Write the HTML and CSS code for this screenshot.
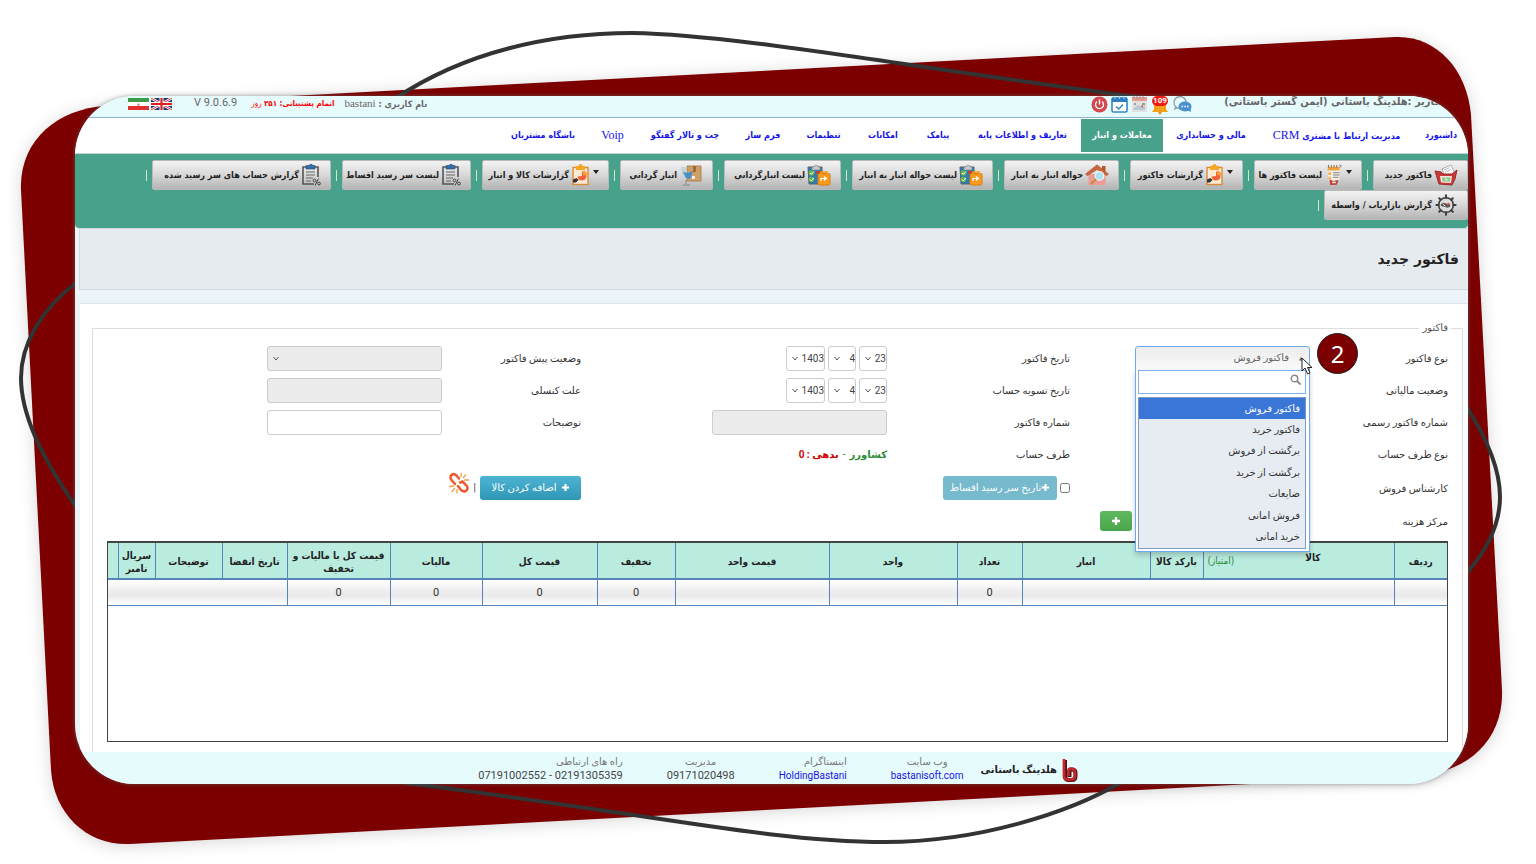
FILE: index.html
```html
<!DOCTYPE html>
<html lang="fa" dir="rtl">
<head>
<meta charset="utf-8">
<title>فاکتور جدید</title>
<link rel="stylesheet" href="styles.css">
</head>
<body>
<svg class="symbols" aria-hidden="true">
  <symbol id="i-percent" viewBox="0 0 20 22">
    <path d="M6 3H2v17h11M14 3h3v10" fill="none" stroke="#555" stroke-width="1.6"/>
    <path d="M5 1.5h3.500a1.500 1.500 0 0 1 3 0H14V5H5z" fill="#2f6fb0" stroke="#30475e" stroke-width=".6"/>
    <path d="M5 8h9M5 11h9M5 14h7M5 17h5" stroke="#666" stroke-width="1.200"/>
    <circle cx="13.500" cy="16.500" r="1.400" fill="none" stroke="#444"/><circle cx="18" cy="19.500" r="1.400" fill="none" stroke="#444"/><path d="M17.500 14.500l-3.500 7" stroke="#444"/>
  </symbol>
  <symbol id="i-report" viewBox="0 0 20 22">
    <rect x="2" y="3.500" width="15" height="17" fill="#fbe9d7" stroke="#d98a3a" stroke-width="1.400"/>
    <path d="M5 2h2.500a2 2 0 0 1 4 0H14v4H5z" fill="#f5a623"/>
    <path d="M11 7.500a4.500 4.500 0 1 1-4.500 5L11 12z" fill="#f4623a"/><path d="M12 6.800a4.500 4.500 0 0 1 4.500 4.500L12 11.300z" fill="#ff9c3a"/>
    <path d="M2 15.500l3.500-1.500 2 2-2.500 2.500H2z" fill="#333"/>
  </symbol>
  <symbol id="i-check" viewBox="0 0 24 22">
    <path d="M1 3h14v17H2z" fill="#2d7db3" stroke="#55606b" stroke-width="1"/>
    <path d="M5 3h2a2 2 0 0 1 4 0h2v3H5z" fill="#c3c9cd" stroke="#888" stroke-width=".6"/>
    <circle cx="4.500" cy="9" r="2.800" fill="#69b74a"/><circle cx="4.500" cy="15.500" r="2.800" fill="#69b74a"/>
    <path d="M3 9l1.300 1.300L7 7.500M3 15.500l1.300 1.300L7 14" fill="none" stroke="#fff" stroke-width="1"/>
    <path d="M9 7h5v3H9z" fill="#b8492e"/>
    <rect x="11" y="9.500" width="12" height="11.500" rx="1.500" fill="#f79a1e" stroke="#d87d0d"/><path d="M14 10V8h6v2" fill="none" stroke="#f79a1e" stroke-width="1.500"/>
    <path d="M14 17v-2.500h5M17 12.500l2.500 2-2.500 2" fill="none" stroke="#fff" stroke-width="1.200"/>
  </symbol>
  <symbol id="i-house" viewBox="0 0 24 22">
    <path d="M3.500 10h17v11h-17z" fill="#eb9c96"/><path d="M17 2h3.500v6H17z" fill="#b5552f"/>
    <path d="M12 .8L23.500 10l-1.800 1.700L12 5.500l-9.700 6.200L.5 10z" fill="#c9653a" stroke="#a9502b" stroke-width=".5"/>
    <circle cx="14.500" cy="12" r="4.300" fill="#a9e1f5" stroke="#f1f1f1" stroke-width="1.300"/><path d="M11 15l-5 5" stroke="#c28a3c" stroke-width="2"/>
  </symbol>
  <symbol id="i-box" viewBox="0 0 24 22">
    <path d="M8 2h14v15H8z" fill="#cf9f68" stroke="#a77944" stroke-width=".8"/><path d="M14 2h3v6h-3z" fill="#9c6b39"/>
    <path d="M2 3h6l-1 13H4z" fill="#c8d1d8"/><path d="M4 8l5 1 2 6-4-1zM9 9l5-2-3 8z" fill="#3f91ca"/><path d="M13 12h3v3h-3z" fill="#e7eff4"/>
    <path d="M7 16v4M4 21h7" stroke="#999" stroke-width="1.500"/>
  </symbol>
  <symbol id="i-folder" viewBox="0 0 24 22">
    <path d="M8 5l9-4 4 9-9 5z" fill="#fff" stroke="#999" stroke-width=".8"/><path d="M10 6l6-2.500M11 8l6-2.500" stroke="#b9b9b9"/>
    <path d="M1 7l6 1 2 2 9 0 5-4-2 9-3 6-13-1z" fill="#c9393b" stroke="#98282b"/>
    <path d="M6 12h12l-1 7-10-.5z" fill="#f0e5da"/><path d="M8 13.500h8.500l-.5 4H8.500z" fill="#8ec88a"/><circle cx="12.300" cy="15.500" r="1.200" fill="#cde8c6"/>
  </symbol>
  <symbol id="i-list" viewBox="0 0 20 24">
    <path d="M4 4h12v14H4z" fill="#f5f1ea"/><path d="M3 3h13v4H3z" fill="#f2a43c"/><path d="M4 4V1M7 4V1M10 4V1M13 4V1M16 4l2-2-2-1" stroke="#555" fill="none" stroke-width=".8"/>
    <path d="M9 9.500h7M9 12h7M9 14.500h6" stroke="#777" stroke-width="1"/><path d="M4 9h3v3H4zM4 14h3v3H4z" fill="#f5b14a"/>
    <path d="M5 17l4 1.500 6-1-2 5-7 .5z" fill="#c8383a"/><path d="M8 19h4v2H8z" fill="#d9ead2"/>
  </symbol>
  <symbol id="i-gear" viewBox="0 0 24 24">
    <circle cx="12" cy="12" r="8" fill="#dcdcdc" stroke="#3d3d3d" stroke-width="1.700"/>
    <g stroke="#3d3d3d" stroke-width="2.200" stroke-linecap="round"><path d="M12 1.500V4M12 20v2.500M1.500 12H4M20 12h2.500M4.600 4.600l1.700 1.700M17.700 17.700l1.700 1.700M19.400 4.600l-1.700 1.700M6.300 17.700l-1.700 1.700"/></g>
    <path d="M6.500 11l3-1.500 3 1 4 1v2.500l-3 1-3.500-1-3.500-1z" fill="#555"/><path d="M12.500 10.500l3-1 1 2-3 1z" fill="#d65045"/><path d="M8.500 11l3 2.500" stroke="#eee"/>
  </symbol>
  <symbol id="i-plus" viewBox="0 0 10 10"><path d="M5 1v8M1 5h8" stroke="#fff" stroke-width="2.400"/></symbol>
</svg>

<svg class="backdrop" viewBox="0 0 1536 864" preserveAspectRatio="none" aria-hidden="true">
  <path class="slab" d="M105 106C58 109 19 140 21 190L51 770C54 815 88 846 130 844L1420 775C1470 772 1504 737 1502 690L1471 115C1467 68 1435 35 1395 37Z"/>
  <g class="loop">
    <path d="M396 98C465 52 550 33 632 33C740 35 900 66 1145 98"/>
    <path d="M405 783C640 812 768 842 885 842C980 842 1070 812 1120 783"/>
    <path d="M77 282C40 310 21 345 21 378C21 420 50 470 77 508"/>
    <path d="M1466 406C1488 440 1500 470 1500 497C1500 525 1487 550 1466 574"/>
  </g>
</svg>

<div class="screen">
  <header class="topbar">
    <span class="company">کاربر :هلدینگ باستانی (ایمن گستر باستانی)</span>
    <span class="status">
      <svg width="20" height="16" viewBox="0 0 20 16"><circle cx="8" cy="6.500" r="6" fill="none" stroke="#8c9aa8" stroke-width="1.300"/><path d="M3 11l-1.500 3 4-1.500" fill="#8c9aa8"/><ellipse cx="13" cy="10.500" rx="6.500" ry="5" fill="#4a8fd0"/><path d="M15 14l4 2-.5-4" fill="#4a8fd0"/><path d="M9.500 10.500h1.500M12.300 10.500h1.500M15 10.500h1.500" stroke="#fff" stroke-width="1.500"/></svg>
      <span class="alert"><svg width="18" height="19" viewBox="0 0 18 19"><path d="M3 7h12v6l2 3H1l2-3z" fill="#f5a11c"/><path d="M7 16h4l-2 3z" fill="#e88c10"/></svg><b>109</b></span>
      <svg width="17" height="17" viewBox="0 0 17 17"><path d="M1 1h15v15H1z" fill="#e2e2e2"/><path d="M1 1h15v4H1z" fill="#e99a8f"/><path d="M3 0v3M6 0v3M9 0v3M12 0v3" stroke="#999"/><path d="M3 7h2v2H3zM11 7h3v2h-3z" fill="#999"/><path d="M2 13l5-4 3 2 4-2v5H2z" fill="#b5c9d6"/><path d="M9 10l3-1v3z" fill="#e8703d"/></svg>
      <svg width="17" height="17" viewBox="0 0 17 17"><rect x="1" y="2" width="15" height="14" rx="1.500" fill="#fff" stroke="#3487c4" stroke-width="1.600"/><path d="M1 1.500h15V6H1z" fill="#2f7fc0"/><path d="M4 0v3M8.500 0v3M13 0v3" stroke="#a9d0ea"/><path d="M5 10.500l2.700 2.500L12 8.500" fill="none" stroke="#3487c4" stroke-width="1.500"/></svg>
      <svg width="17" height="17" viewBox="0 0 17 17"><circle cx="8.500" cy="8.500" r="8" fill="#d3494e"/><path d="M6 5.500a4 4 0 1 0 5 0M8.500 3.500v5" fill="none" stroke="#fff" stroke-width="1.300"/></svg>
    </span>
    <span class="user"><b>نام کاربری :</b> bastani</span>
    <span class="support"><b>اتمام پشتیبانی: ۲۵۱</b> روز</span>
    <span class="version" dir="ltr">V 9.0.6.9</span>
    <span class="flags">
      <svg width="21" height="12" viewBox="0 0 21 12"><path d="M0 0h21v12H0z" fill="#21366f"/><path d="M0 0l21 12M21 0L0 12" stroke="#fff" stroke-width="2.600"/><path d="M0 0l21 12M21 0L0 12" stroke="#d22" stroke-width=".9"/><path d="M10.500 0v12M0 6h21" stroke="#fff" stroke-width="4"/><path d="M10.500 0v12M0 6h21" stroke="#d22" stroke-width="2.200"/></svg>
      <svg width="21" height="12" viewBox="0 0 21 12"><path d="M0 0h21v12H0z" fill="#fff"/><path d="M0 0h21v4H0z" fill="#3c9a4c"/><path d="M0 8h21v4H0z" fill="#e0312f"/><path d="M9 7.500l1.500-2.500L12 7.500z" fill="#d66"/></svg>
    </span>
  </header>

  <nav class="tabs">
    <a href="#">داشبورد</a><a href="#">مدیریت ارتباط با مشتری <span>CRM</span></a><a href="#">مالی و حسابداری</a><a href="#" class="active">معاملات و انبار</a><a href="#">تعاریف و اطلاعات پایه</a><a href="#">پیامک</a><a href="#">امکانات</a><a href="#">تنظیمات</a><a href="#">فرم ساز</a><a href="#">چت و تالار گفتگو</a><a href="#"><span>Voip</span></a><a href="#">باشگاه مشتریان</a>
  </nav>

  <div class="toolbar">
    <button class="w-new"><svg><use href="#i-folder"/></svg>فاکتور جدید</button><i></i>
    <button class="w-list menu"><svg class="slim"><use href="#i-list"/></svg>لیست فاکتور ها</button><i></i>
    <button class="w-reports menu"><svg class="slim"><use href="#i-report"/></svg>گزارشات فاکتور</button><i></i>
    <button class="w-transfer"><svg><use href="#i-house"/></svg>حواله انبار به انبار</button><i></i>
    <button class="w-transfers"><svg><use href="#i-check"/></svg>لیست حواله انبار به انبار</button><i></i>
    <button class="w-counts"><svg><use href="#i-check"/></svg>لیست انبارگردانی</button><i></i>
    <button class="w-count"><svg><use href="#i-box"/></svg>انبار گردانی</button><i></i>
    <button class="w-goods menu"><svg class="slim"><use href="#i-report"/></svg>گزارشات کالا و انبار</button><i></i>
    <button class="w-due"><svg class="slim"><use href="#i-percent"/></svg>لیست سر رسید اقساط</button><i></i>
    <button class="w-accounts"><svg class="slim"><use href="#i-percent"/></svg>گزارش حساب های سر رسید شده</button><i></i>
    <button class="w-broker"><svg><use href="#i-gear"/></svg>گزارش بازاریاب / واسطه</button><i></i>
  </div>

  <div class="heading"><h1>فاکتور جدید</h1></div>

  <main class="card">
    <fieldset>
      <legend>فاکتور</legend>
      <div class="form">
        <label id="l-type">نوع فاکتور</label>
        <div class="cell picker">
          <button class="picked" aria-labelledby="l-type" aria-haspopup="listbox" aria-expanded="true"><small>▲</small>فاکتور فروش</button>
          <div class="drop">
            <div class="search"><input type="text" aria-label="جستجو"><svg width="11" height="11" viewBox="0 0 11 11"><circle cx="4.500" cy="4.500" r="3.300" fill="none" stroke="#888" stroke-width="1.400"/><path d="M7 7l3.500 3.500" stroke="#888" stroke-width="1.800"/></svg></div>
            <ul role="listbox">
              <li role="option" aria-selected="true">فاکتور فروش</li>
              <li role="option">فاکتور خرید</li>
              <li role="option">برگشت از فروش</li>
              <li role="option">برگشت از خرید</li>
              <li role="option">ضایعات</li>
              <li role="option">فروش امانی</li>
              <li role="option">خرید امانی</li>
            </ul>
          </div>
          <span class="step">2</span>
          <svg class="pointer" width="12" height="18" viewBox="0 0 12 18"><path d="M1 1v13l3-3 2.500 6 2.500-1-2.500-5.500H11z" fill="#fff" stroke="#222"/></svg>
        </div>
        <label for="day1">تاریخ فاکتور</label>
        <div class="cell date">
          <select id="day1" class="short"><option>23</option></select><select class="short" aria-label="ماه"><option>4</option></select><select class="year" aria-label="سال"><option>1403</option></select>
        </div>
        <label for="pre">وضعیت پیش فاکتور</label>
        <div class="cell"><select id="pre" class="field" disabled><option></option></select></div>

        <label>وضعیت مالیاتی</label><div class="cell"></div>
        <label for="day2">تاریخ تسویه حساب</label>
        <div class="cell date">
          <select id="day2" class="short"><option>23</option></select><select class="short" aria-label="ماه"><option>4</option></select><select class="year" aria-label="سال"><option>1403</option></select>
        </div>
        <label for="cancel">علت کنسلی</label>
        <div class="cell"><input id="cancel" class="field" type="text" disabled></div>

        <label>شماره فاکتور رسمی</label><div class="cell"></div>
        <label for="number">شماره فاکتور</label>
        <div class="cell"><input id="number" class="field" type="text" disabled></div>
        <label for="notes">توضیحات</label>
        <div class="cell"><input id="notes" class="field" type="text"></div>

        <label>نوع طرف حساب</label><div class="cell"></div>
        <label>طرف حساب</label>
        <div class="cell party"><b>کشاورز</b> - <b class="debt">بدهی : 0</b></div>
        <div class="cell wide"></div>

        <label>کارشناس فروش</label><div class="cell"></div>
        <div class="cell wide"><input type="checkbox" id="inst" aria-label="اقساط"><button class="btn soft"><svg width="9" height="9"><use href="#i-plus"/></svg>تاریخ سر رسید اقساط</button></div>
        <div class="cell wide">
          <button class="btn blue"><svg width="9" height="9"><use href="#i-plus"/></svg>اضافه کردن کالا</button><span class="bar">|</span>
          <svg class="unlink" width="22" height="22" viewBox="0 0 22 22"><g fill="none" stroke="#ee5a30" stroke-width="2.500" stroke-linecap="round"><path d="M7 12L3.500 8Q1.500 5 3.500 3Q6 1 8.500 3.500L11 6.500"/><path d="M10 14l3 4Q16 20.500 18.500 18.500Q20.500 16 18.500 13.500L14.500 9.500L12 10.500"/></g><g stroke="#f0a04a" stroke-width="1.300"><path d="M13 5l.5-4M15 6l3-3.500M16 8h5M6 14l-5 .5M7 16l-3.500 4M9 17v4.500"/></g></svg>
        </div>

        <label>مرکز هزینه</label>
        <div class="cell"><button class="btn green" aria-label="افزودن"><svg width="10" height="10"><use href="#i-plus"/></svg></button></div>
        <div class="cell wide"></div><div class="cell wide"></div>
      </div>

      <div class="grid-box">
        <table>
          <colgroup><col class="c53"><col class="c191"><col class="c53"><col class="c128"><col class="c65"><col class="c128"><col class="c154"><col class="c78"><col class="c115"><col class="c92"><col class="c103"><col class="c65"><col class="c67"><col class="c37"><col class="c10"></colgroup>
          <thead><tr>
            <th>ردیف</th><th><div class="goods"><span>کالا</span><em>(امتیاز)</em></div></th><th>بارکد کالا</th><th>انبار</th><th>تعداد</th><th>واحد</th><th>قیمت واحد</th><th>تخفیف</th><th>قیمت کل</th><th>مالیات</th><th>قیمت کل با مالیات و تخفیف</th><th>تاریخ انقضا</th><th>توضیحات</th><th>سریال نامبر</th><th></th>
          </tr></thead>
          <tbody><tr>
            <td></td><td colspan="3"></td><td>0</td><td></td><td></td><td>0</td><td>0</td><td>0</td><td>0</td><td colspan="4"></td>
          </tr></tbody>
        </table>
      </div>
    </fieldset>
  </main>

  <footer>
    <div class="brand"><svg width="17" height="24" viewBox="0 0 17 24"><path d="M4 2v16q0 4 4 4h3q3.500 0 3.500-4v-3q0-3.500-3.500-3.500H9.500q-1 0-1 2V19" fill="none" stroke="#4a1416" stroke-width="4"/><path d="M3 1v17q0 3.500 4 3.500h3.500q3.500 0 3.500-3.500v-3.500q0-3.500-3.500-3.500H9q-1.500 0-1.500 2V18" fill="none" stroke="#c3262c" stroke-width="2.800"/></svg><b>هلدینگ باستانی</b></div>
    <div class="info mid"><span>وب سایت</span><a href="#">bastanisoft.com</a></div>
    <div class="info"><span>اینستاگرام</span><a href="#">HoldingBastani</a></div>
    <div class="info mid"><span>مدیریت</span><strong>09171020498</strong></div>
    <div class="info"><span>راه های ارتباطی</span><strong dir="ltr">07191002552 - 02191305359</strong></div>
  </footer>
</div>
</body>
</html>
```
FILE: styles.css
```css
* { box-sizing: border-box; }

body {
  margin: 0;
  min-height: 100vh;
  padding: 96px 68px 80px 75px;
  position: relative;
  display: flex;
  background: #fff;
  color: #333;
  font: 10px/14px Roboto, "DejaVu Sans", sans-serif;
}

button, input, select { font: inherit; color: inherit; margin: 0; }
a { text-decoration: none; }

.symbols { position: absolute; width: 0; height: 0; }

.backdrop {
  position: absolute;
  inset: 0;
  width: 100%;
  height: 100%;
}
.slab { fill: #7c0000; filter: drop-shadow(0 2px 8px rgba(0, 0, 0, .16)); }
.loop path { fill: none; stroke: #333; stroke-width: 4; }

.screen {
  position: relative;
  flex: 1;
  min-width: 0;
  display: flex;
  flex-direction: column;
  overflow: hidden;
  border-radius: 60px;
  background: #ebf4f9;
  box-shadow: 0 0 4px rgba(120, 120, 120, .6), 0 2px 10px rgba(0, 0, 0, .12);
}

/* Top bar */
.topbar {
  display: flex;
  align-items: flex-start;
  height: 22px;
  padding: 0 28px 0 53px;
  background: #e6fbfc;
  border-bottom: 1px solid #8fb2d2;
  color: #666;
  white-space: nowrap;
  line-height: 14px;
}
.company { width: 202px; flex: none; font: bold 11px/12px "DejaVu Sans Condensed", "DejaVu Sans", sans-serif; }
.status { display: flex; gap: 3px; margin-right: 46px; }
.alert { position: relative; height: 19px; }
.alert b {
  position: absolute;
  top: 0;
  left: 1px;
  width: 16px;
  border-radius: 6px;
  background: #f01c14;
  color: #fff;
  font-size: 8px;
  line-height: 10px;
  text-align: center;
}
.user { margin-right: auto; font-family: "Liberation Serif", "DejaVu Sans", serif; font-size: 11px; }
.user b, .support { font-size: 9px; font-family: "DejaVu Sans Condensed", "DejaVu Sans", sans-serif; }
.support { margin-right: 10px; color: #f00; font-size: 8px; line-height: 16px; }
.version { margin-right: 14px; font-size: 11px; }
.flags { display: flex; gap: 2px; margin-right: 22px; padding-top: 2px; }

/* Main tabs */
.tabs {
  display: grid;
  grid-template-columns: 54px 155px 96px 82px 117px 52px 58px 61px 60px 96px 49px 90px;
  padding: 1px 0;
  background: #fff;
  border-bottom: 1px solid #c5d3d3;
}
.tabs a {
  display: block;
  color: #1414e6;
  font: bold 9px/32px "DejaVu Sans Condensed", "DejaVu Sans", sans-serif;
  text-align: center;
  white-space: nowrap;
}
.tabs a span { font: 12px/32px "Liberation Serif", serif; }
.tabs .active { background: #48a28b; color: #fff; }

/* Toolbar */
.toolbar {
  display: flex;
  flex-wrap: wrap;
  align-content: flex-start;
  height: 74px;
  padding-top: 6px;
  background: #48a28b;
  border-radius: 0 0 4px 4px;
}
.toolbar button {
  display: flex;
  align-items: center;
  gap: 2px;
  height: 30px;
  padding: 0 9px 0 0;
  border: 1px solid #b9b9b9;
  border-radius: 2px;
  background: linear-gradient(#f3f3f3, #d8d8d8 50%, #b4b4b4);
  color: #222;
  font: bold 9px/14px "DejaVu Sans Condensed", "DejaVu Sans", sans-serif;
  white-space: nowrap;
}
.toolbar svg { width: 24px; height: 22px; flex: none; }
.toolbar svg.slim { width: 20px; }
.toolbar .menu::before {
  content: "";
  align-self: flex-start;
  margin-top: 9px;
  border: 3px solid transparent;
  border-top: 4px solid #222;
}
.toolbar i { width: 1px; height: 11px; margin: 10px 5px 0; background: #cfe8c8; }
.toolbar .w-new { width: 95px; }
.toolbar .w-list { width: 108px; }
.toolbar .w-reports { width: 113px; }
.toolbar .w-transfer { width: 115px; }
.toolbar .w-transfers { width: 141px; }
.toolbar .w-counts { width: 117px; }
.toolbar .w-count { width: 93px; }
.toolbar .w-goods { width: 127px; }
.toolbar .w-due { width: 129px; }
.toolbar .w-accounts { width: 179px; }
.toolbar .w-broker { width: 144px; }

/* Page heading */
.heading {
  height: 62px;
  margin-left: 4px;
  padding: 21px 9px 0;
  background: #e6ebf0;
  border: 1px solid #d3dade;
  border-right: 0;
}
h1 { margin: 0; color: #222; font: bold 14px/18px "DejaVu Sans", sans-serif; }

/* Form card */
.card {
  flex: 1;
  margin: 13px 0 0 5px;
  padding: 17px 5px 0 12px;
  background: #fff;
  border-top: 1px solid #dde4e8;
}
fieldset {
  height: 100%;
  min-width: 0;
  margin: 0;
  padding: 7px 14px 0;
  border: 1px solid #ddd;
  border-bottom: 0;
}
legend { margin-right: -3px; padding: 0 3px; color: #555; }

.form {
  display: grid;
  grid-template-columns: 138fr 240fr 183fr 306fr 139fr 335fr;
  grid-template-rows: repeat(4, 32px) 35px 32px;
  align-items: center;
}
.form label, .party { padding-top: 2px; white-space: nowrap; }
.cell { display: flex; align-items: center; min-width: 0; }
.wide { grid-column: span 2; }

.field, .date select {
  height: 25px;
  border: 1px solid #ccc;
  border-radius: 3px;
  background-color: #fff;
}
.field { width: 175px; }
.field:disabled { background-color: #ececec; opacity: 1; }
select {
  appearance: none;
  padding: 0;
  background-image: url("data:image/svg+xml,%3Csvg xmlns='http://www.w3.org/2000/svg' width='6' height='5'%3E%3Cpath d='M.5 1L3 4L5.500 1' fill='none' stroke='%23555'/%3E%3C/svg%3E");
  background-repeat: no-repeat;
  background-position: 5px center;
}
.date { gap: 3px; }
.date select { padding-top: 2px; font-size: 10px; color: #444; }
.date .short { width: 28px; }
.date .year { width: 39px; }

.party { gap: 4px; color: #2a8a35; }
.party .debt { color: #c00; }

.btn {
  display: flex;
  align-items: center;
  justify-content: center;
  height: 24px;
  border: 0;
  border-radius: 3px;
  color: #fff;
  white-space: nowrap;
}
.soft { width: 114px; padding: 0; background: #77b9cd; }
.blue { width: 101px; gap: 4px; padding: 0; background: linear-gradient(#4db4d4, #2f96b4); }
.green { width: 32px; height: 20px; margin-right: 178px; background: linear-gradient(#5fb95f, #4aa64a); }
.bar { margin: 0 4px; }
.unlink { margin-bottom: 9px; }
input[type="checkbox"] { width: 10px; height: 10px; margin-left: 3px; }

/* Open picker */
.picker { position: relative; }
.picked {
  display: flex;
  align-items: center;
  gap: 8px;
  width: 175px;
  height: 25px;
  padding: 0 4px;
  border: 1px solid #6ea9ee;
  border-radius: 3px 3px 0 0;
  background: linear-gradient(#ececec, #fafafa);
  color: #666;
}
.picked small { width: 8px; font-size: 5px; }
.drop {
  position: absolute;
  z-index: 2;
  top: 24px;
  right: 0;
  width: 175px;
  padding: 0 3px 2px 2px;
  background: #fff;
  border: 1px solid #6ea9ee;
  border-top: 0;
  box-shadow: 0 3px 5px rgba(0, 0, 0, .2);
}
.search { position: relative; }
.search input { display: block; width: 100%; height: 24px; border: 1px solid #7fb2f0; background: #fff; }
.search svg { position: absolute; top: 4px; right: 5px; }
.drop ul {
  display: grid;
  grid-auto-rows: 1fr;
  height: 152px;
  margin: 3px 0 0;
  padding: 0;
  border: 1px solid #7d9cc4;
  background: #e7ecf3;
  list-style: none;
}
.drop li { padding: 0 5px; line-height: 21px; }
.drop li[aria-selected="true"] { background: #3a76d8; color: #fff; }
.step {
  position: absolute;
  z-index: 3;
  top: -13px;
  right: -48px;
  width: 41px;
  height: 41px;
  border: 1px solid #222;
  border-radius: 50%;
  background: #7c0000;
  color: #fff;
  font: 24px/39px "Noto Sans", sans-serif;
  text-align: center;
}
.pointer { position: absolute; z-index: 3; top: 11px; right: -3px; }

/* Item table */
.grid-box { min-height: 201px; margin-top: 4px; border: 1px solid #444; border-top-width: 2px; }
table { width: 100%; table-layout: fixed; border-collapse: collapse; }
.c53 { width: 53px; } .c191 { width: 191px; } .c128 { width: 128px; } .c65 { width: 65px; }
.c154 { width: 154px; } .c78 { width: 78px; } .c115 { width: 115px; } .c92 { width: 92px; }
.c103 { width: 103px; } .c67 { width: 67px; } .c37 { width: 37px; } .c10 { width: 10px; }
th, td { padding: 2px 0 0; border: 1px solid #5484b8; text-align: center; }
th { height: 36px; background: #b9ebdf; color: #222; font: bold 10px/13px "DejaVu Sans Condensed", "DejaVu Sans", sans-serif; border-bottom-width: 2px; }
td { height: 26px; background: linear-gradient(#fff, #e8e8e8 60%, #fff); font-size: 11px; }
tr > :first-child { border-right: 0; }
tr > :last-child { border-left: 0; }
thead th { border-top: 0; }
.goods { display: flex; justify-content: space-between; padding: 0 73px 0 4px; margin-top: -6px; }
.goods em { color: #2a8a35; font-style: normal; font-weight: normal; padding-top: 3px; }

/* Footer */
footer {
  display: flex;
  gap: 44px;
  height: 32px;
  padding: 3px 28% 0 0;
  background: #e6fbfc;
  white-space: nowrap;
}
.brand { display: flex; align-items: center; gap: 4px; margin-left: -27px; color: #222; }
.info { display: flex; flex-direction: column; font-size: 10px; line-height: 14px; color: #777; }
.mid { align-items: center; }
.info a { color: #1414e6; }
.info strong { font-size: 11px; font-weight: 400; color: #444; }
```
